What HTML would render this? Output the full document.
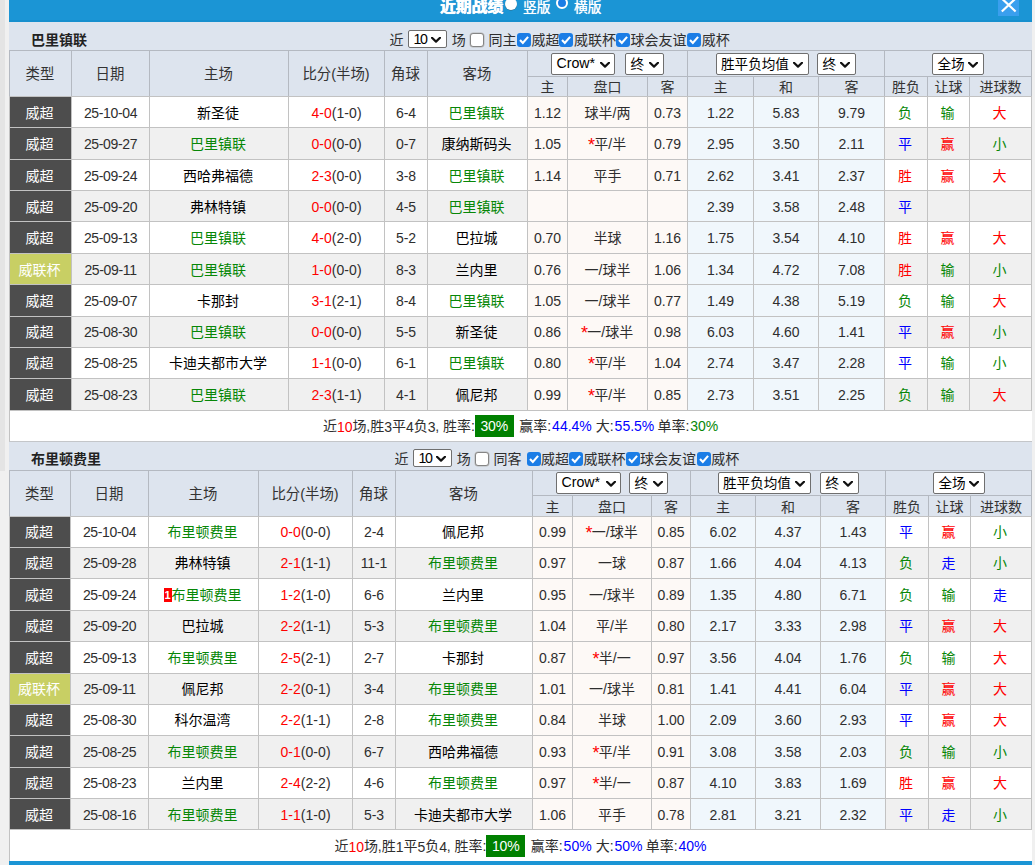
<!DOCTYPE html>
<html lang="zh-CN"><head><meta charset="utf-8"><title>近期战绩</title>
<style>

html,body{margin:0;padding:0}
body{width:1035px;height:865px;position:relative;overflow:hidden;background:#f0f0f0;
 font-family:"Liberation Sans","Noto Sans CJK SC",sans-serif;font-size:14px;color:#2e2e2e}
div{box-sizing:border-box}
.a{position:absolute}
.c{position:absolute;display:flex;align-items:center;justify-content:center;white-space:nowrap;overflow:hidden}
.n{font-size:14px;letter-spacing:-0.1px;position:relative;top:1px}
.dr{align-items:flex-start;line-height:20px}
.dr .n{top:0}
.as{font-size:18px;line-height:0;position:relative;top:1.5px;margin-right:-0.8px;margin-left:-0.8px}
.d{letter-spacing:-0.35px}
.s{letter-spacing:0.05px}
.m{margin-left:0.9px;letter-spacing:0px}
.ns{font-size:14.2px}
.t10{letter-spacing:-1.4px;position:relative;top:1px}
.sc{font-size:13.6px}
.g{color:#078707}.r{color:#ff0000}.b{color:#0000ff}.k{color:#000}
.sel{position:absolute;padding-bottom:1.5px;background:#fff;border:1px solid #6f6f6f;border-radius:2px;display:flex;align-items:center;white-space:nowrap;color:#000}
.sel svg{position:absolute;right:5px;top:50%;margin-top:-2.5px}
.cb{position:absolute;width:14px;height:14px;border-radius:3px}
.cb.off{background:#fff;border:1px solid #858585;box-shadow:0 0 0 0.5px #b8b8b8}
.cb.on{background:#1b7de6}
.t{position:absolute;white-space:nowrap;line-height:20px;height:20px}
.hd{background:#dde4ee}

</style></head><body>
<div class="a" style="left:0;top:0;width:5px;height:471px;background:#e4e4e4"></div>
<div class="a" style="left:9px;top:0;width:1023px;height:22px;background:#1b95d5"></div>
<div class="a" style="left:9px;top:20px;width:1023px;height:2px;background:#168fce"></div>
<div class="t" style="left:440px;top:-4px;color:#fff;font-weight:bold;text-shadow:0 0 0.8px #fff,0.3px 0 0 #fff;font-size:15.8px;line-height:22px;height:22px">近期战绩</div>
<div class="a" style="left:504.5px;top:-2px;width:12px;height:12px;border-radius:50%;background:#fff;box-shadow:0 0.5px 0.5px rgba(80,60,40,.5)"></div>
<div class="t" style="left:523px;top:-2.5px;color:#fff;font-weight:normal;text-shadow:0 0 0.7px #fff;font-size:13.8px">竖版</div>
<div class="a" style="left:556px;top:-3px;width:12px;height:12px;border-radius:50%;background:#1b7de6;border:2.5px solid #fff"></div>
<div class="t" style="left:574px;top:-2.5px;color:#fff;font-weight:normal;text-shadow:0 0 0.7px #fff;font-size:13.8px">横版</div>
<div class="a" style="left:998px;top:0;width:21px;height:16px;background:#3a9fee"></div>
<svg class="a" style="left:998px;top:0" width="21" height="16" viewBox="0 0 21 16"><path d="M3.8 -1.5 L17.6 11.5 M17.6 -1.5 L3.8 11.5" stroke="#fff" stroke-width="2.2" fill="none"/></svg>
<div class="a hd" style="left:9px;top:22px;width:1023px;height:28px"></div>
<div class="t" style="left:31px;top:30px;font-weight:bold;font-size:14px;color:#222">巴里镇联</div>
<div class="t" style="left:389.5px;top:30px">近</div>
<div class="sel" style="left:408px;top:30px;width:39px;height:18px;padding-left:4.6px"><span class="ns t10">10</span><svg style="right:5px" width="10" height="6" viewBox="0 0 10 6"><path d="M1 0.8 L5 4.6 L9 0.8" stroke="#111" stroke-width="2.2" fill="none" stroke-linecap="round" stroke-linejoin="round"/></svg></div>
<div class="t" style="left:451.8px;top:30px">场</div>
<div class="cb off" style="left:470px;top:33px"></div>
<div class="t" style="left:488.5px;top:30px">同主</div>
<div class="cb on" style="left:517px;top:33px"><svg width="14" height="14" viewBox="0 0 13 13" style="display:block"><path d="M2.8 6.6 L5.4 9.2 L10.3 3.6" stroke="#fff" stroke-width="2" fill="none"/></svg></div>
<div class="t" style="left:531.6px;top:30px">威超</div>
<div class="cb on" style="left:559.3px;top:33px"><svg width="14" height="14" viewBox="0 0 13 13" style="display:block"><path d="M2.8 6.6 L5.4 9.2 L10.3 3.6" stroke="#fff" stroke-width="2" fill="none"/></svg></div>
<div class="t" style="left:573.9px;top:30px">威联杯</div>
<div class="cb on" style="left:616px;top:33px"><svg width="14" height="14" viewBox="0 0 13 13" style="display:block"><path d="M2.8 6.6 L5.4 9.2 L10.3 3.6" stroke="#fff" stroke-width="2" fill="none"/></svg></div>
<div class="t" style="left:630.6px;top:30px">球会友谊</div>
<div class="cb on" style="left:687.1px;top:33px"><svg width="14" height="14" viewBox="0 0 13 13" style="display:block"><path d="M2.8 6.6 L5.4 9.2 L10.3 3.6" stroke="#fff" stroke-width="2" fill="none"/></svg></div>
<div class="t" style="left:701.7px;top:30px">威杯</div>
<div class="a" style="left:9px;top:50px;width:1023px;height:47px;background:#b4b9c1"></div>
<div class="a" style="left:9px;top:96px;width:1023px;height:346px;background:#c2c2c2"></div>
<div class="c" style="left:10px;top:51px;width:61px;height:45px;background:#dde4ee;color:#333;font-size:14.4px;padding-bottom:2.5px;padding-right:1px">类型</div>
<div class="c" style="left:72px;top:51px;width:77px;height:45px;background:#dde4ee;color:#333;font-size:14.4px;padding-bottom:2.5px;padding-right:1px">日期</div>
<div class="c" style="left:150px;top:51px;width:138px;height:45px;background:#dde4ee;color:#333;font-size:14.4px;padding-bottom:2.5px;padding-right:1px">主场</div>
<div class="c" style="left:289px;top:51px;width:95px;height:45px;background:#dde4ee;color:#333;font-size:14.4px;padding-bottom:2.5px;padding-right:1px">比分(半场)</div>
<div class="c" style="left:385px;top:51px;width:42px;height:45px;background:#dde4ee;color:#333;font-size:14.4px;padding-bottom:2.5px;padding-right:1px">角球</div>
<div class="c" style="left:428px;top:51px;width:99px;height:45px;background:#dde4ee;color:#333;font-size:14.4px;padding-bottom:2.5px;padding-right:1px">客场</div>
<div class="c" style="left:528px;top:51px;width:159px;height:25px;background:#dde4ee;"></div>
<div class="c" style="left:688px;top:51px;width:196px;height:25px;background:#dde4ee;"></div>
<div class="c" style="left:885px;top:51px;width:146px;height:25px;background:#dde4ee;"></div>
<div class="c" style="left:528px;top:77px;width:39px;height:19px;background:#dde4ee;color:#333;padding-bottom:1px">主</div>
<div class="c" style="left:568px;top:77px;width:79px;height:19px;background:#dde4ee;color:#333;padding-bottom:1px">盘口</div>
<div class="c" style="left:648px;top:77px;width:39px;height:19px;background:#dde4ee;color:#333;padding-bottom:1px">客</div>
<div class="c" style="left:688px;top:77px;width:65px;height:19px;background:#dde4ee;color:#333;padding-bottom:1px">主</div>
<div class="c" style="left:754px;top:77px;width:64px;height:19px;background:#dde4ee;color:#333;padding-bottom:1px">和</div>
<div class="c" style="left:819px;top:77px;width:65px;height:19px;background:#dde4ee;color:#333;padding-bottom:1px">客</div>
<div class="c" style="left:885px;top:77px;width:42px;height:19px;background:#dde4ee;color:#333;padding-bottom:1px">胜负</div>
<div class="c" style="left:928px;top:77px;width:41px;height:19px;background:#dde4ee;color:#333;padding-bottom:1px">让球</div>
<div class="c" style="left:970px;top:77px;width:61px;height:19px;background:#dde4ee;color:#333;padding-bottom:1px">进球数</div>
<div class="sel" style="left:551px;top:53px;width:64px;height:22px;padding-left:4.5px"><span class="ns">Crow*</span><svg style="right:4px" width="10" height="6" viewBox="0 0 10 6"><path d="M1 0.8 L5 4.6 L9 0.8" stroke="#111" stroke-width="2.2" fill="none" stroke-linecap="round" stroke-linejoin="round"/></svg></div>
<div class="sel" style="left:625px;top:53px;width:39px;height:22px;padding-left:4.5px"><span class="sc">终</span><svg style="right:4px" width="10" height="6" viewBox="0 0 10 6"><path d="M1 0.8 L5 4.6 L9 0.8" stroke="#111" stroke-width="2.2" fill="none" stroke-linecap="round" stroke-linejoin="round"/></svg></div>
<div class="sel" style="left:716px;top:53px;width:93px;height:22px;padding-left:4px"><span class="sc">胜平负均值</span><svg style="right:5px" width="10" height="6" viewBox="0 0 10 6"><path d="M1 0.8 L5 4.6 L9 0.8" stroke="#111" stroke-width="2.2" fill="none" stroke-linecap="round" stroke-linejoin="round"/></svg></div>
<div class="sel" style="left:817px;top:53px;width:39px;height:22px;padding-left:4.5px"><span class="sc">终</span><svg style="right:5px" width="10" height="6" viewBox="0 0 10 6"><path d="M1 0.8 L5 4.6 L9 0.8" stroke="#111" stroke-width="2.2" fill="none" stroke-linecap="round" stroke-linejoin="round"/></svg></div>
<div class="sel" style="left:932px;top:53px;width:52px;height:22px;padding-left:4.5px"><span class="sc">全场</span><svg style="right:5px" width="10" height="6" viewBox="0 0 10 6"><path d="M1 0.8 L5 4.6 L9 0.8" stroke="#111" stroke-width="2.2" fill="none" stroke-linecap="round" stroke-linejoin="round"/></svg></div>
<div class="c dr" style="left:10px;top:97px;width:61px;height:30px;background:#4d4d4d;padding-top:6px;color:#fff;padding-right:2px">威超</div>
<div class="c dr" style="left:72px;top:97px;width:77px;height:30px;background:#fff;padding-top:6px;"><span class="n d">25-10-04</span></div>
<div class="c dr" style="left:150px;top:97px;width:138px;height:30px;background:#fff;padding-top:6px;padding-right:2px"><span class="k">新圣徒</span></div>
<div class="c dr" style="left:289px;top:97px;width:95px;height:30px;background:#fff;padding-top:6px;"><span class="n s"><span class="r">4-0</span>(1-0)</span></div>
<div class="c dr" style="left:385px;top:97px;width:42px;height:30px;background:#fff;padding-top:6px;"><span class="n">6-4</span></div>
<div class="c dr" style="left:428px;top:97px;width:99px;height:30px;background:#fff;padding-top:6px;padding-right:2px"><span class="g">巴里镇联</span></div>
<div class="c dr" style="left:528px;top:97px;width:39px;height:30px;background:#fdf9f6;padding-top:6px;"><span class="n">1.12</span></div>
<div class="c dr" style="left:568px;top:97px;width:79px;height:30px;background:#fdf9f6;padding-top:6px;"><span>球半/两</span></div>
<div class="c dr" style="left:648px;top:97px;width:39px;height:30px;background:#fdf9f6;padding-top:6px;"><span class="n">0.73</span></div>
<div class="c dr" style="left:688px;top:97px;width:65px;height:30px;background:#f0f7fc;padding-top:6px;"><span class="n">1.22</span></div>
<div class="c dr" style="left:754px;top:97px;width:64px;height:30px;background:#f0f7fc;padding-top:6px;"><span class="n">5.83</span></div>
<div class="c dr" style="left:819px;top:97px;width:65px;height:30px;background:#f0f7fc;padding-top:6px;"><span class="n">9.79</span></div>
<div class="c dr" style="left:885px;top:97px;width:42px;height:30px;background:#fff;padding-top:6px;padding-right:2px"><span class="g">负</span></div>
<div class="c dr" style="left:928px;top:97px;width:41px;height:30px;background:#fff;padding-top:6px;padding-right:2px"><span class="g">输</span></div>
<div class="c dr" style="left:970px;top:97px;width:61px;height:30px;background:#fff;padding-top:6px;padding-right:2px"><span class="r">大</span></div>
<div class="c dr" style="left:10px;top:128px;width:61px;height:31px;background:#4d4d4d;padding-top:6px;color:#fff;padding-right:2px">威超</div>
<div class="c dr" style="left:72px;top:128px;width:77px;height:31px;background:#f0f0f0;padding-top:6px;"><span class="n d">25-09-27</span></div>
<div class="c dr" style="left:150px;top:128px;width:138px;height:31px;background:#f0f0f0;padding-top:6px;padding-right:2px"><span class="g">巴里镇联</span></div>
<div class="c dr" style="left:289px;top:128px;width:95px;height:31px;background:#f0f0f0;padding-top:6px;"><span class="n s"><span class="r">0-0</span>(0-0)</span></div>
<div class="c dr" style="left:385px;top:128px;width:42px;height:31px;background:#f0f0f0;padding-top:6px;"><span class="n">0-7</span></div>
<div class="c dr" style="left:428px;top:128px;width:99px;height:31px;background:#f0f0f0;padding-top:6px;padding-right:2px"><span class="k">康纳斯码头</span></div>
<div class="c dr" style="left:528px;top:128px;width:39px;height:31px;background:#fdf9f6;padding-top:6px;"><span class="n">1.05</span></div>
<div class="c dr" style="left:568px;top:128px;width:79px;height:31px;background:#fdf9f6;padding-top:6px;"><span><span class="r as">*</span>平/半</span></div>
<div class="c dr" style="left:648px;top:128px;width:39px;height:31px;background:#fdf9f6;padding-top:6px;"><span class="n">0.79</span></div>
<div class="c dr" style="left:688px;top:128px;width:65px;height:31px;background:#f0f7fc;padding-top:6px;"><span class="n">2.95</span></div>
<div class="c dr" style="left:754px;top:128px;width:64px;height:31px;background:#f0f7fc;padding-top:6px;"><span class="n">3.50</span></div>
<div class="c dr" style="left:819px;top:128px;width:65px;height:31px;background:#f0f7fc;padding-top:6px;"><span class="n">2.11</span></div>
<div class="c dr" style="left:885px;top:128px;width:42px;height:31px;background:#f0f0f0;padding-top:6px;padding-right:2px"><span class="b">平</span></div>
<div class="c dr" style="left:928px;top:128px;width:41px;height:31px;background:#f0f0f0;padding-top:6px;padding-right:2px"><span class="r">赢</span></div>
<div class="c dr" style="left:970px;top:128px;width:61px;height:31px;background:#f0f0f0;padding-top:6px;padding-right:2px"><span class="g">小</span></div>
<div class="c dr" style="left:10px;top:160px;width:61px;height:30px;background:#4d4d4d;padding-top:6px;color:#fff;padding-right:2px">威超</div>
<div class="c dr" style="left:72px;top:160px;width:77px;height:30px;background:#fff;padding-top:6px;"><span class="n d">25-09-24</span></div>
<div class="c dr" style="left:150px;top:160px;width:138px;height:30px;background:#fff;padding-top:6px;padding-right:2px"><span class="k">西哈弗福德</span></div>
<div class="c dr" style="left:289px;top:160px;width:95px;height:30px;background:#fff;padding-top:6px;"><span class="n s"><span class="r">2-3</span>(0-0)</span></div>
<div class="c dr" style="left:385px;top:160px;width:42px;height:30px;background:#fff;padding-top:6px;"><span class="n">3-8</span></div>
<div class="c dr" style="left:428px;top:160px;width:99px;height:30px;background:#fff;padding-top:6px;padding-right:2px"><span class="g">巴里镇联</span></div>
<div class="c dr" style="left:528px;top:160px;width:39px;height:30px;background:#fdf9f6;padding-top:6px;"><span class="n">1.14</span></div>
<div class="c dr" style="left:568px;top:160px;width:79px;height:30px;background:#fdf9f6;padding-top:6px;"><span>平手</span></div>
<div class="c dr" style="left:648px;top:160px;width:39px;height:30px;background:#fdf9f6;padding-top:6px;"><span class="n">0.71</span></div>
<div class="c dr" style="left:688px;top:160px;width:65px;height:30px;background:#f0f7fc;padding-top:6px;"><span class="n">2.62</span></div>
<div class="c dr" style="left:754px;top:160px;width:64px;height:30px;background:#f0f7fc;padding-top:6px;"><span class="n">3.41</span></div>
<div class="c dr" style="left:819px;top:160px;width:65px;height:30px;background:#f0f7fc;padding-top:6px;"><span class="n">2.37</span></div>
<div class="c dr" style="left:885px;top:160px;width:42px;height:30px;background:#fff;padding-top:6px;padding-right:2px"><span class="r">胜</span></div>
<div class="c dr" style="left:928px;top:160px;width:41px;height:30px;background:#fff;padding-top:6px;padding-right:2px"><span class="r">赢</span></div>
<div class="c dr" style="left:970px;top:160px;width:61px;height:30px;background:#fff;padding-top:6px;padding-right:2px"><span class="r">大</span></div>
<div class="c dr" style="left:10px;top:191px;width:61px;height:30px;background:#4d4d4d;padding-top:6px;color:#fff;padding-right:2px">威超</div>
<div class="c dr" style="left:72px;top:191px;width:77px;height:30px;background:#f0f0f0;padding-top:6px;"><span class="n d">25-09-20</span></div>
<div class="c dr" style="left:150px;top:191px;width:138px;height:30px;background:#f0f0f0;padding-top:6px;padding-right:2px"><span class="k">弗林特镇</span></div>
<div class="c dr" style="left:289px;top:191px;width:95px;height:30px;background:#f0f0f0;padding-top:6px;"><span class="n s"><span class="r">0-0</span>(0-0)</span></div>
<div class="c dr" style="left:385px;top:191px;width:42px;height:30px;background:#f0f0f0;padding-top:6px;"><span class="n">4-5</span></div>
<div class="c dr" style="left:428px;top:191px;width:99px;height:30px;background:#f0f0f0;padding-top:6px;padding-right:2px"><span class="g">巴里镇联</span></div>
<div class="c dr" style="left:528px;top:191px;width:39px;height:30px;background:#fdf9f6;padding-top:6px;"><span class="n"></span></div>
<div class="c dr" style="left:568px;top:191px;width:79px;height:30px;background:#fdf9f6;padding-top:6px;"><span></span></div>
<div class="c dr" style="left:648px;top:191px;width:39px;height:30px;background:#fdf9f6;padding-top:6px;"><span class="n"></span></div>
<div class="c dr" style="left:688px;top:191px;width:65px;height:30px;background:#f0f7fc;padding-top:6px;"><span class="n">2.39</span></div>
<div class="c dr" style="left:754px;top:191px;width:64px;height:30px;background:#f0f7fc;padding-top:6px;"><span class="n">3.58</span></div>
<div class="c dr" style="left:819px;top:191px;width:65px;height:30px;background:#f0f7fc;padding-top:6px;"><span class="n">2.48</span></div>
<div class="c dr" style="left:885px;top:191px;width:42px;height:30px;background:#f0f0f0;padding-top:6px;padding-right:2px"><span class="b">平</span></div>
<div class="c dr" style="left:928px;top:191px;width:41px;height:30px;background:#f0f0f0;padding-top:6px;padding-right:2px"><span class=""></span></div>
<div class="c dr" style="left:970px;top:191px;width:61px;height:30px;background:#f0f0f0;padding-top:6px;padding-right:2px"><span class=""></span></div>
<div class="c dr" style="left:10px;top:222px;width:61px;height:31px;background:#4d4d4d;padding-top:6px;color:#fff;padding-right:2px">威超</div>
<div class="c dr" style="left:72px;top:222px;width:77px;height:31px;background:#fff;padding-top:6px;"><span class="n d">25-09-13</span></div>
<div class="c dr" style="left:150px;top:222px;width:138px;height:31px;background:#fff;padding-top:6px;padding-right:2px"><span class="g">巴里镇联</span></div>
<div class="c dr" style="left:289px;top:222px;width:95px;height:31px;background:#fff;padding-top:6px;"><span class="n s"><span class="r">4-0</span>(2-0)</span></div>
<div class="c dr" style="left:385px;top:222px;width:42px;height:31px;background:#fff;padding-top:6px;"><span class="n">5-2</span></div>
<div class="c dr" style="left:428px;top:222px;width:99px;height:31px;background:#fff;padding-top:6px;padding-right:2px"><span class="k">巴拉城</span></div>
<div class="c dr" style="left:528px;top:222px;width:39px;height:31px;background:#fdf9f6;padding-top:6px;"><span class="n">0.70</span></div>
<div class="c dr" style="left:568px;top:222px;width:79px;height:31px;background:#fdf9f6;padding-top:6px;"><span>半球</span></div>
<div class="c dr" style="left:648px;top:222px;width:39px;height:31px;background:#fdf9f6;padding-top:6px;"><span class="n">1.16</span></div>
<div class="c dr" style="left:688px;top:222px;width:65px;height:31px;background:#f0f7fc;padding-top:6px;"><span class="n">1.75</span></div>
<div class="c dr" style="left:754px;top:222px;width:64px;height:31px;background:#f0f7fc;padding-top:6px;"><span class="n">3.54</span></div>
<div class="c dr" style="left:819px;top:222px;width:65px;height:31px;background:#f0f7fc;padding-top:6px;"><span class="n">4.10</span></div>
<div class="c dr" style="left:885px;top:222px;width:42px;height:31px;background:#fff;padding-top:6px;padding-right:2px"><span class="r">胜</span></div>
<div class="c dr" style="left:928px;top:222px;width:41px;height:31px;background:#fff;padding-top:6px;padding-right:2px"><span class="r">赢</span></div>
<div class="c dr" style="left:970px;top:222px;width:61px;height:31px;background:#fff;padding-top:6px;padding-right:2px"><span class="r">大</span></div>
<div class="c dr" style="left:10px;top:254px;width:61px;height:30px;background:#c8cf64;padding-top:6px;color:#fff;padding-right:2px">威联杯</div>
<div class="c dr" style="left:72px;top:254px;width:77px;height:30px;background:#f0f0f0;padding-top:6px;"><span class="n d">25-09-11</span></div>
<div class="c dr" style="left:150px;top:254px;width:138px;height:30px;background:#f0f0f0;padding-top:6px;padding-right:2px"><span class="g">巴里镇联</span></div>
<div class="c dr" style="left:289px;top:254px;width:95px;height:30px;background:#f0f0f0;padding-top:6px;"><span class="n s"><span class="r">1-0</span>(0-0)</span></div>
<div class="c dr" style="left:385px;top:254px;width:42px;height:30px;background:#f0f0f0;padding-top:6px;"><span class="n">8-3</span></div>
<div class="c dr" style="left:428px;top:254px;width:99px;height:30px;background:#f0f0f0;padding-top:6px;padding-right:2px"><span class="k">兰内里</span></div>
<div class="c dr" style="left:528px;top:254px;width:39px;height:30px;background:#fdf9f6;padding-top:6px;"><span class="n">0.76</span></div>
<div class="c dr" style="left:568px;top:254px;width:79px;height:30px;background:#fdf9f6;padding-top:6px;"><span>一/球半</span></div>
<div class="c dr" style="left:648px;top:254px;width:39px;height:30px;background:#fdf9f6;padding-top:6px;"><span class="n">1.06</span></div>
<div class="c dr" style="left:688px;top:254px;width:65px;height:30px;background:#f0f7fc;padding-top:6px;"><span class="n">1.34</span></div>
<div class="c dr" style="left:754px;top:254px;width:64px;height:30px;background:#f0f7fc;padding-top:6px;"><span class="n">4.72</span></div>
<div class="c dr" style="left:819px;top:254px;width:65px;height:30px;background:#f0f7fc;padding-top:6px;"><span class="n">7.08</span></div>
<div class="c dr" style="left:885px;top:254px;width:42px;height:30px;background:#f0f0f0;padding-top:6px;padding-right:2px"><span class="r">胜</span></div>
<div class="c dr" style="left:928px;top:254px;width:41px;height:30px;background:#f0f0f0;padding-top:6px;padding-right:2px"><span class="g">输</span></div>
<div class="c dr" style="left:970px;top:254px;width:61px;height:30px;background:#f0f0f0;padding-top:6px;padding-right:2px"><span class="g">小</span></div>
<div class="c dr" style="left:10px;top:285px;width:61px;height:31px;background:#4d4d4d;padding-top:6px;color:#fff;padding-right:2px">威超</div>
<div class="c dr" style="left:72px;top:285px;width:77px;height:31px;background:#fff;padding-top:6px;"><span class="n d">25-09-07</span></div>
<div class="c dr" style="left:150px;top:285px;width:138px;height:31px;background:#fff;padding-top:6px;padding-right:2px"><span class="k">卡那封</span></div>
<div class="c dr" style="left:289px;top:285px;width:95px;height:31px;background:#fff;padding-top:6px;"><span class="n s"><span class="r">3-1</span>(2-1)</span></div>
<div class="c dr" style="left:385px;top:285px;width:42px;height:31px;background:#fff;padding-top:6px;"><span class="n">8-4</span></div>
<div class="c dr" style="left:428px;top:285px;width:99px;height:31px;background:#fff;padding-top:6px;padding-right:2px"><span class="g">巴里镇联</span></div>
<div class="c dr" style="left:528px;top:285px;width:39px;height:31px;background:#fdf9f6;padding-top:6px;"><span class="n">1.05</span></div>
<div class="c dr" style="left:568px;top:285px;width:79px;height:31px;background:#fdf9f6;padding-top:6px;"><span>一/球半</span></div>
<div class="c dr" style="left:648px;top:285px;width:39px;height:31px;background:#fdf9f6;padding-top:6px;"><span class="n">0.77</span></div>
<div class="c dr" style="left:688px;top:285px;width:65px;height:31px;background:#f0f7fc;padding-top:6px;"><span class="n">1.49</span></div>
<div class="c dr" style="left:754px;top:285px;width:64px;height:31px;background:#f0f7fc;padding-top:6px;"><span class="n">4.38</span></div>
<div class="c dr" style="left:819px;top:285px;width:65px;height:31px;background:#f0f7fc;padding-top:6px;"><span class="n">5.19</span></div>
<div class="c dr" style="left:885px;top:285px;width:42px;height:31px;background:#fff;padding-top:6px;padding-right:2px"><span class="g">负</span></div>
<div class="c dr" style="left:928px;top:285px;width:41px;height:31px;background:#fff;padding-top:6px;padding-right:2px"><span class="g">输</span></div>
<div class="c dr" style="left:970px;top:285px;width:61px;height:31px;background:#fff;padding-top:6px;padding-right:2px"><span class="r">大</span></div>
<div class="c dr" style="left:10px;top:317px;width:61px;height:30px;background:#4d4d4d;padding-top:5px;color:#fff;padding-right:2px">威超</div>
<div class="c dr" style="left:72px;top:317px;width:77px;height:30px;background:#f0f0f0;padding-top:5px;"><span class="n d">25-08-30</span></div>
<div class="c dr" style="left:150px;top:317px;width:138px;height:30px;background:#f0f0f0;padding-top:5px;padding-right:2px"><span class="g">巴里镇联</span></div>
<div class="c dr" style="left:289px;top:317px;width:95px;height:30px;background:#f0f0f0;padding-top:5px;"><span class="n s"><span class="r">0-0</span>(0-0)</span></div>
<div class="c dr" style="left:385px;top:317px;width:42px;height:30px;background:#f0f0f0;padding-top:5px;"><span class="n">5-5</span></div>
<div class="c dr" style="left:428px;top:317px;width:99px;height:30px;background:#f0f0f0;padding-top:5px;padding-right:2px"><span class="k">新圣徒</span></div>
<div class="c dr" style="left:528px;top:317px;width:39px;height:30px;background:#fdf9f6;padding-top:5px;"><span class="n">0.86</span></div>
<div class="c dr" style="left:568px;top:317px;width:79px;height:30px;background:#fdf9f6;padding-top:5px;"><span><span class="r as">*</span>一/球半</span></div>
<div class="c dr" style="left:648px;top:317px;width:39px;height:30px;background:#fdf9f6;padding-top:5px;"><span class="n">0.98</span></div>
<div class="c dr" style="left:688px;top:317px;width:65px;height:30px;background:#f0f7fc;padding-top:5px;"><span class="n">6.03</span></div>
<div class="c dr" style="left:754px;top:317px;width:64px;height:30px;background:#f0f7fc;padding-top:5px;"><span class="n">4.60</span></div>
<div class="c dr" style="left:819px;top:317px;width:65px;height:30px;background:#f0f7fc;padding-top:5px;"><span class="n">1.41</span></div>
<div class="c dr" style="left:885px;top:317px;width:42px;height:30px;background:#f0f0f0;padding-top:5px;padding-right:2px"><span class="b">平</span></div>
<div class="c dr" style="left:928px;top:317px;width:41px;height:30px;background:#f0f0f0;padding-top:5px;padding-right:2px"><span class="r">赢</span></div>
<div class="c dr" style="left:970px;top:317px;width:61px;height:30px;background:#f0f0f0;padding-top:5px;padding-right:2px"><span class="g">小</span></div>
<div class="c dr" style="left:10px;top:348px;width:61px;height:30px;background:#4d4d4d;padding-top:5px;color:#fff;padding-right:2px">威超</div>
<div class="c dr" style="left:72px;top:348px;width:77px;height:30px;background:#fff;padding-top:5px;"><span class="n d">25-08-25</span></div>
<div class="c dr" style="left:150px;top:348px;width:138px;height:30px;background:#fff;padding-top:5px;padding-right:2px"><span class="k">卡迪夫都市大学</span></div>
<div class="c dr" style="left:289px;top:348px;width:95px;height:30px;background:#fff;padding-top:5px;"><span class="n s"><span class="r">1-1</span>(0-0)</span></div>
<div class="c dr" style="left:385px;top:348px;width:42px;height:30px;background:#fff;padding-top:5px;"><span class="n">6-1</span></div>
<div class="c dr" style="left:428px;top:348px;width:99px;height:30px;background:#fff;padding-top:5px;padding-right:2px"><span class="g">巴里镇联</span></div>
<div class="c dr" style="left:528px;top:348px;width:39px;height:30px;background:#fdf9f6;padding-top:5px;"><span class="n">0.80</span></div>
<div class="c dr" style="left:568px;top:348px;width:79px;height:30px;background:#fdf9f6;padding-top:5px;"><span><span class="r as">*</span>平/半</span></div>
<div class="c dr" style="left:648px;top:348px;width:39px;height:30px;background:#fdf9f6;padding-top:5px;"><span class="n">1.04</span></div>
<div class="c dr" style="left:688px;top:348px;width:65px;height:30px;background:#f0f7fc;padding-top:5px;"><span class="n">2.74</span></div>
<div class="c dr" style="left:754px;top:348px;width:64px;height:30px;background:#f0f7fc;padding-top:5px;"><span class="n">3.47</span></div>
<div class="c dr" style="left:819px;top:348px;width:65px;height:30px;background:#f0f7fc;padding-top:5px;"><span class="n">2.28</span></div>
<div class="c dr" style="left:885px;top:348px;width:42px;height:30px;background:#fff;padding-top:5px;padding-right:2px"><span class="b">平</span></div>
<div class="c dr" style="left:928px;top:348px;width:41px;height:30px;background:#fff;padding-top:5px;padding-right:2px"><span class="g">输</span></div>
<div class="c dr" style="left:970px;top:348px;width:61px;height:30px;background:#fff;padding-top:5px;padding-right:2px"><span class="g">小</span></div>
<div class="c dr" style="left:10px;top:379px;width:61px;height:31px;background:#4d4d4d;padding-top:6px;color:#fff;padding-right:2px">威超</div>
<div class="c dr" style="left:72px;top:379px;width:77px;height:31px;background:#f0f0f0;padding-top:6px;"><span class="n d">25-08-23</span></div>
<div class="c dr" style="left:150px;top:379px;width:138px;height:31px;background:#f0f0f0;padding-top:6px;padding-right:2px"><span class="g">巴里镇联</span></div>
<div class="c dr" style="left:289px;top:379px;width:95px;height:31px;background:#f0f0f0;padding-top:6px;"><span class="n s"><span class="r">2-3</span>(1-1)</span></div>
<div class="c dr" style="left:385px;top:379px;width:42px;height:31px;background:#f0f0f0;padding-top:6px;"><span class="n">4-1</span></div>
<div class="c dr" style="left:428px;top:379px;width:99px;height:31px;background:#f0f0f0;padding-top:6px;padding-right:2px"><span class="k">佩尼邦</span></div>
<div class="c dr" style="left:528px;top:379px;width:39px;height:31px;background:#fdf9f6;padding-top:6px;"><span class="n">0.99</span></div>
<div class="c dr" style="left:568px;top:379px;width:79px;height:31px;background:#fdf9f6;padding-top:6px;"><span><span class="r as">*</span>平/半</span></div>
<div class="c dr" style="left:648px;top:379px;width:39px;height:31px;background:#fdf9f6;padding-top:6px;"><span class="n">0.85</span></div>
<div class="c dr" style="left:688px;top:379px;width:65px;height:31px;background:#f0f7fc;padding-top:6px;"><span class="n">2.73</span></div>
<div class="c dr" style="left:754px;top:379px;width:64px;height:31px;background:#f0f7fc;padding-top:6px;"><span class="n">3.51</span></div>
<div class="c dr" style="left:819px;top:379px;width:65px;height:31px;background:#f0f7fc;padding-top:6px;"><span class="n">2.25</span></div>
<div class="c dr" style="left:885px;top:379px;width:42px;height:31px;background:#f0f0f0;padding-top:6px;padding-right:2px"><span class="g">负</span></div>
<div class="c dr" style="left:928px;top:379px;width:41px;height:31px;background:#f0f0f0;padding-top:6px;padding-right:2px"><span class="g">输</span></div>
<div class="c dr" style="left:970px;top:379px;width:61px;height:31px;background:#f0f0f0;padding-top:6px;padding-right:2px"><span class="r">大</span></div>
<div class="c" style="left:10px;top:411px;width:1022px;height:30px;background:#fff"><span style="position:absolute;left:313px;top:-1px;height:100%;display:flex;align-items:center"><span>近<span class="r n">10</span>场,胜<span class="n">3</span>平<span class="n">4</span>负<span class="n">3</span>, 胜率:</span><span style="display:inline-block;background:#008000;color:#fff;height:22px;line-height:21px;position:relative;top:1px;padding:0 5.8px;margin-left:-0.4px"><span class="n">30%</span></span><span style="margin-left:5.4px">赢率:</span><span class="b n m">44.4%</span><span style="margin-left:4px">大:</span><span class="b n m">55.5%</span><span style="margin-left:3.2px">单率:</span><span class="g n m">30%</span></span></div>
<div class="a hd" style="left:9px;top:441px;width:1023px;height:29px"></div>
<div class="t" style="left:31px;top:449px;font-weight:bold;font-size:14px;color:#222">布里顿费里</div>
<div class="t" style="left:394.5px;top:449px">近</div>
<div class="sel" style="left:413px;top:449px;width:39px;height:18px;padding-left:4.6px"><span class="ns t10">10</span><svg style="right:5px" width="10" height="6" viewBox="0 0 10 6"><path d="M1 0.8 L5 4.6 L9 0.8" stroke="#111" stroke-width="2.2" fill="none" stroke-linecap="round" stroke-linejoin="round"/></svg></div>
<div class="t" style="left:456.8px;top:449px">场</div>
<div class="cb off" style="left:475px;top:452px"></div>
<div class="t" style="left:493.5px;top:449px">同客</div>
<div class="cb on" style="left:526.5px;top:452px"><svg width="14" height="14" viewBox="0 0 13 13" style="display:block"><path d="M2.8 6.6 L5.4 9.2 L10.3 3.6" stroke="#fff" stroke-width="2" fill="none"/></svg></div>
<div class="t" style="left:541.1px;top:449px">威超</div>
<div class="cb on" style="left:568.8px;top:452px"><svg width="14" height="14" viewBox="0 0 13 13" style="display:block"><path d="M2.8 6.6 L5.4 9.2 L10.3 3.6" stroke="#fff" stroke-width="2" fill="none"/></svg></div>
<div class="t" style="left:583.4px;top:449px">威联杯</div>
<div class="cb on" style="left:625.5px;top:452px"><svg width="14" height="14" viewBox="0 0 13 13" style="display:block"><path d="M2.8 6.6 L5.4 9.2 L10.3 3.6" stroke="#fff" stroke-width="2" fill="none"/></svg></div>
<div class="t" style="left:640.1px;top:449px">球会友谊</div>
<div class="cb on" style="left:696.6px;top:452px"><svg width="14" height="14" viewBox="0 0 13 13" style="display:block"><path d="M2.8 6.6 L5.4 9.2 L10.3 3.6" stroke="#fff" stroke-width="2" fill="none"/></svg></div>
<div class="t" style="left:711.2px;top:449px">威杯</div>
<div class="a" style="left:9px;top:441px;width:1023px;height:1px;background:#c4c6c9"></div>
<div class="a" style="left:9px;top:470px;width:1023px;height:47px;background:#b4b9c1"></div>
<div class="a" style="left:9px;top:516px;width:1023px;height:345px;background:#c2c2c2"></div>
<div class="c" style="left:10px;top:471px;width:60px;height:45px;background:#dde4ee;color:#333;font-size:14.4px;padding-bottom:2.5px;padding-right:1px">类型</div>
<div class="c" style="left:71px;top:471px;width:77px;height:45px;background:#dde4ee;color:#333;font-size:14.4px;padding-bottom:2.5px;padding-right:1px">日期</div>
<div class="c" style="left:149px;top:471px;width:109px;height:45px;background:#dde4ee;color:#333;font-size:14.4px;padding-bottom:2.5px;padding-right:1px">主场</div>
<div class="c" style="left:259px;top:471px;width:93px;height:45px;background:#dde4ee;color:#333;font-size:14.4px;padding-bottom:2.5px;padding-right:1px">比分(半场)</div>
<div class="c" style="left:353px;top:471px;width:42px;height:45px;background:#dde4ee;color:#333;font-size:14.4px;padding-bottom:2.5px;padding-right:1px">角球</div>
<div class="c" style="left:396px;top:471px;width:136px;height:45px;background:#dde4ee;color:#333;font-size:14.4px;padding-bottom:2.5px;padding-right:1px">客场</div>
<div class="c" style="left:533px;top:471px;width:157px;height:24px;background:#dde4ee;"></div>
<div class="c" style="left:691px;top:471px;width:194px;height:24px;background:#dde4ee;"></div>
<div class="c" style="left:886px;top:471px;width:145px;height:24px;background:#dde4ee;"></div>
<div class="c" style="left:533px;top:496px;width:39px;height:20px;background:#dde4ee;color:#333;padding-bottom:1px">主</div>
<div class="c" style="left:573px;top:496px;width:78px;height:20px;background:#dde4ee;color:#333;padding-bottom:1px">盘口</div>
<div class="c" style="left:652px;top:496px;width:38px;height:20px;background:#dde4ee;color:#333;padding-bottom:1px">客</div>
<div class="c" style="left:691px;top:496px;width:64px;height:20px;background:#dde4ee;color:#333;padding-bottom:1px">主</div>
<div class="c" style="left:756px;top:496px;width:64px;height:20px;background:#dde4ee;color:#333;padding-bottom:1px">和</div>
<div class="c" style="left:821px;top:496px;width:64px;height:20px;background:#dde4ee;color:#333;padding-bottom:1px">客</div>
<div class="c" style="left:886px;top:496px;width:42px;height:20px;background:#dde4ee;color:#333;padding-bottom:1px">胜负</div>
<div class="c" style="left:929px;top:496px;width:41px;height:20px;background:#dde4ee;color:#333;padding-bottom:1px">让球</div>
<div class="c" style="left:971px;top:496px;width:60px;height:20px;background:#dde4ee;color:#333;padding-bottom:1px">进球数</div>
<div class="sel" style="left:556px;top:472px;width:65px;height:22px;padding-left:4.5px"><span class="ns">Crow*</span><svg style="right:4px" width="10" height="6" viewBox="0 0 10 6"><path d="M1 0.8 L5 4.6 L9 0.8" stroke="#111" stroke-width="2.2" fill="none" stroke-linecap="round" stroke-linejoin="round"/></svg></div>
<div class="sel" style="left:629px;top:472px;width:39px;height:22px;padding-left:4.5px"><span class="sc">终</span><svg style="right:4px" width="10" height="6" viewBox="0 0 10 6"><path d="M1 0.8 L5 4.6 L9 0.8" stroke="#111" stroke-width="2.2" fill="none" stroke-linecap="round" stroke-linejoin="round"/></svg></div>
<div class="sel" style="left:718px;top:472px;width:93px;height:22px;padding-left:4px"><span class="sc">胜平负均值</span><svg style="right:5px" width="10" height="6" viewBox="0 0 10 6"><path d="M1 0.8 L5 4.6 L9 0.8" stroke="#111" stroke-width="2.2" fill="none" stroke-linecap="round" stroke-linejoin="round"/></svg></div>
<div class="sel" style="left:820px;top:472px;width:39px;height:22px;padding-left:4.5px"><span class="sc">终</span><svg style="right:5px" width="10" height="6" viewBox="0 0 10 6"><path d="M1 0.8 L5 4.6 L9 0.8" stroke="#111" stroke-width="2.2" fill="none" stroke-linecap="round" stroke-linejoin="round"/></svg></div>
<div class="sel" style="left:933px;top:472px;width:52px;height:22px;padding-left:4.5px"><span class="sc">全场</span><svg style="right:5px" width="10" height="6" viewBox="0 0 10 6"><path d="M1 0.8 L5 4.6 L9 0.8" stroke="#111" stroke-width="2.2" fill="none" stroke-linecap="round" stroke-linejoin="round"/></svg></div>
<div class="c dr" style="left:10px;top:517px;width:60px;height:30px;background:#4d4d4d;padding-top:5px;color:#fff;padding-right:2px">威超</div>
<div class="c dr" style="left:71px;top:517px;width:77px;height:30px;background:#fff;padding-top:5px;"><span class="n d">25-10-04</span></div>
<div class="c dr" style="left:149px;top:517px;width:109px;height:30px;background:#fff;padding-top:5px;padding-right:2px"><span class="g">布里顿费里</span></div>
<div class="c dr" style="left:259px;top:517px;width:93px;height:30px;background:#fff;padding-top:5px;"><span class="n s"><span class="r">0-0</span>(0-0)</span></div>
<div class="c dr" style="left:353px;top:517px;width:42px;height:30px;background:#fff;padding-top:5px;"><span class="n">2-4</span></div>
<div class="c dr" style="left:396px;top:517px;width:136px;height:30px;background:#fff;padding-top:5px;padding-right:2px"><span class="k">佩尼邦</span></div>
<div class="c dr" style="left:533px;top:517px;width:39px;height:30px;background:#fdf9f6;padding-top:5px;"><span class="n">0.99</span></div>
<div class="c dr" style="left:573px;top:517px;width:78px;height:30px;background:#fdf9f6;padding-top:5px;"><span><span class="r as">*</span>一/球半</span></div>
<div class="c dr" style="left:652px;top:517px;width:38px;height:30px;background:#fdf9f6;padding-top:5px;"><span class="n">0.85</span></div>
<div class="c dr" style="left:691px;top:517px;width:64px;height:30px;background:#f0f7fc;padding-top:5px;"><span class="n">6.02</span></div>
<div class="c dr" style="left:756px;top:517px;width:64px;height:30px;background:#f0f7fc;padding-top:5px;"><span class="n">4.37</span></div>
<div class="c dr" style="left:821px;top:517px;width:64px;height:30px;background:#f0f7fc;padding-top:5px;"><span class="n">1.43</span></div>
<div class="c dr" style="left:886px;top:517px;width:42px;height:30px;background:#fff;padding-top:5px;padding-right:2px"><span class="b">平</span></div>
<div class="c dr" style="left:929px;top:517px;width:41px;height:30px;background:#fff;padding-top:5px;padding-right:2px"><span class="r">赢</span></div>
<div class="c dr" style="left:971px;top:517px;width:60px;height:30px;background:#fff;padding-top:5px;padding-right:2px"><span class="g">小</span></div>
<div class="c dr" style="left:10px;top:548px;width:60px;height:30px;background:#4d4d4d;padding-top:5px;color:#fff;padding-right:2px">威超</div>
<div class="c dr" style="left:71px;top:548px;width:77px;height:30px;background:#f0f0f0;padding-top:5px;"><span class="n d">25-09-28</span></div>
<div class="c dr" style="left:149px;top:548px;width:109px;height:30px;background:#f0f0f0;padding-top:5px;padding-right:2px"><span class="k">弗林特镇</span></div>
<div class="c dr" style="left:259px;top:548px;width:93px;height:30px;background:#f0f0f0;padding-top:5px;"><span class="n s"><span class="r">2-1</span>(1-1)</span></div>
<div class="c dr" style="left:353px;top:548px;width:42px;height:30px;background:#f0f0f0;padding-top:5px;"><span class="n">11-1</span></div>
<div class="c dr" style="left:396px;top:548px;width:136px;height:30px;background:#f0f0f0;padding-top:5px;padding-right:2px"><span class="g">布里顿费里</span></div>
<div class="c dr" style="left:533px;top:548px;width:39px;height:30px;background:#fdf9f6;padding-top:5px;"><span class="n">0.97</span></div>
<div class="c dr" style="left:573px;top:548px;width:78px;height:30px;background:#fdf9f6;padding-top:5px;"><span>一球</span></div>
<div class="c dr" style="left:652px;top:548px;width:38px;height:30px;background:#fdf9f6;padding-top:5px;"><span class="n">0.87</span></div>
<div class="c dr" style="left:691px;top:548px;width:64px;height:30px;background:#f0f7fc;padding-top:5px;"><span class="n">1.66</span></div>
<div class="c dr" style="left:756px;top:548px;width:64px;height:30px;background:#f0f7fc;padding-top:5px;"><span class="n">4.04</span></div>
<div class="c dr" style="left:821px;top:548px;width:64px;height:30px;background:#f0f7fc;padding-top:5px;"><span class="n">4.13</span></div>
<div class="c dr" style="left:886px;top:548px;width:42px;height:30px;background:#f0f0f0;padding-top:5px;padding-right:2px"><span class="g">负</span></div>
<div class="c dr" style="left:929px;top:548px;width:41px;height:30px;background:#f0f0f0;padding-top:5px;padding-right:2px"><span class="b">走</span></div>
<div class="c dr" style="left:971px;top:548px;width:60px;height:30px;background:#f0f0f0;padding-top:5px;padding-right:2px"><span class="g">小</span></div>
<div class="c dr" style="left:10px;top:579px;width:60px;height:31px;background:#4d4d4d;padding-top:6px;color:#fff;padding-right:2px">威超</div>
<div class="c dr" style="left:71px;top:579px;width:77px;height:31px;background:#fff;padding-top:6px;"><span class="n d">25-09-24</span></div>
<div class="c dr" style="left:149px;top:579px;width:109px;height:31px;background:#fff;padding-top:6px;padding-right:2px"><span class="g"><span style="display:inline-block;background:#f00;color:#fff;font-weight:bold;font-size:11px;width:8px;height:14px;line-height:14px;text-align:center;position:relative;top:-1px;font-family:'Liberation Sans',sans-serif">1</span>布里顿费里</span></div>
<div class="c dr" style="left:259px;top:579px;width:93px;height:31px;background:#fff;padding-top:6px;"><span class="n s"><span class="r">1-2</span>(1-0)</span></div>
<div class="c dr" style="left:353px;top:579px;width:42px;height:31px;background:#fff;padding-top:6px;"><span class="n">6-6</span></div>
<div class="c dr" style="left:396px;top:579px;width:136px;height:31px;background:#fff;padding-top:6px;padding-right:2px"><span class="k">兰内里</span></div>
<div class="c dr" style="left:533px;top:579px;width:39px;height:31px;background:#fdf9f6;padding-top:6px;"><span class="n">0.95</span></div>
<div class="c dr" style="left:573px;top:579px;width:78px;height:31px;background:#fdf9f6;padding-top:6px;"><span>一/球半</span></div>
<div class="c dr" style="left:652px;top:579px;width:38px;height:31px;background:#fdf9f6;padding-top:6px;"><span class="n">0.89</span></div>
<div class="c dr" style="left:691px;top:579px;width:64px;height:31px;background:#f0f7fc;padding-top:6px;"><span class="n">1.35</span></div>
<div class="c dr" style="left:756px;top:579px;width:64px;height:31px;background:#f0f7fc;padding-top:6px;"><span class="n">4.80</span></div>
<div class="c dr" style="left:821px;top:579px;width:64px;height:31px;background:#f0f7fc;padding-top:6px;"><span class="n">6.71</span></div>
<div class="c dr" style="left:886px;top:579px;width:42px;height:31px;background:#fff;padding-top:6px;padding-right:2px"><span class="g">负</span></div>
<div class="c dr" style="left:929px;top:579px;width:41px;height:31px;background:#fff;padding-top:6px;padding-right:2px"><span class="g">输</span></div>
<div class="c dr" style="left:971px;top:579px;width:60px;height:31px;background:#fff;padding-top:6px;padding-right:2px"><span class="b">走</span></div>
<div class="c dr" style="left:10px;top:611px;width:60px;height:30px;background:#4d4d4d;padding-top:5px;color:#fff;padding-right:2px">威超</div>
<div class="c dr" style="left:71px;top:611px;width:77px;height:30px;background:#f0f0f0;padding-top:5px;"><span class="n d">25-09-20</span></div>
<div class="c dr" style="left:149px;top:611px;width:109px;height:30px;background:#f0f0f0;padding-top:5px;padding-right:2px"><span class="k">巴拉城</span></div>
<div class="c dr" style="left:259px;top:611px;width:93px;height:30px;background:#f0f0f0;padding-top:5px;"><span class="n s"><span class="r">2-2</span>(1-1)</span></div>
<div class="c dr" style="left:353px;top:611px;width:42px;height:30px;background:#f0f0f0;padding-top:5px;"><span class="n">5-3</span></div>
<div class="c dr" style="left:396px;top:611px;width:136px;height:30px;background:#f0f0f0;padding-top:5px;padding-right:2px"><span class="g">布里顿费里</span></div>
<div class="c dr" style="left:533px;top:611px;width:39px;height:30px;background:#fdf9f6;padding-top:5px;"><span class="n">1.04</span></div>
<div class="c dr" style="left:573px;top:611px;width:78px;height:30px;background:#fdf9f6;padding-top:5px;"><span>平/半</span></div>
<div class="c dr" style="left:652px;top:611px;width:38px;height:30px;background:#fdf9f6;padding-top:5px;"><span class="n">0.80</span></div>
<div class="c dr" style="left:691px;top:611px;width:64px;height:30px;background:#f0f7fc;padding-top:5px;"><span class="n">2.17</span></div>
<div class="c dr" style="left:756px;top:611px;width:64px;height:30px;background:#f0f7fc;padding-top:5px;"><span class="n">3.33</span></div>
<div class="c dr" style="left:821px;top:611px;width:64px;height:30px;background:#f0f7fc;padding-top:5px;"><span class="n">2.98</span></div>
<div class="c dr" style="left:886px;top:611px;width:42px;height:30px;background:#f0f0f0;padding-top:5px;padding-right:2px"><span class="b">平</span></div>
<div class="c dr" style="left:929px;top:611px;width:41px;height:30px;background:#f0f0f0;padding-top:5px;padding-right:2px"><span class="r">赢</span></div>
<div class="c dr" style="left:971px;top:611px;width:60px;height:30px;background:#f0f0f0;padding-top:5px;padding-right:2px"><span class="r">大</span></div>
<div class="c dr" style="left:10px;top:642px;width:60px;height:31px;background:#4d4d4d;padding-top:6px;color:#fff;padding-right:2px">威超</div>
<div class="c dr" style="left:71px;top:642px;width:77px;height:31px;background:#fff;padding-top:6px;"><span class="n d">25-09-13</span></div>
<div class="c dr" style="left:149px;top:642px;width:109px;height:31px;background:#fff;padding-top:6px;padding-right:2px"><span class="g">布里顿费里</span></div>
<div class="c dr" style="left:259px;top:642px;width:93px;height:31px;background:#fff;padding-top:6px;"><span class="n s"><span class="r">2-5</span>(2-1)</span></div>
<div class="c dr" style="left:353px;top:642px;width:42px;height:31px;background:#fff;padding-top:6px;"><span class="n">2-7</span></div>
<div class="c dr" style="left:396px;top:642px;width:136px;height:31px;background:#fff;padding-top:6px;padding-right:2px"><span class="k">卡那封</span></div>
<div class="c dr" style="left:533px;top:642px;width:39px;height:31px;background:#fdf9f6;padding-top:6px;"><span class="n">0.87</span></div>
<div class="c dr" style="left:573px;top:642px;width:78px;height:31px;background:#fdf9f6;padding-top:6px;"><span><span class="r as">*</span>半/一</span></div>
<div class="c dr" style="left:652px;top:642px;width:38px;height:31px;background:#fdf9f6;padding-top:6px;"><span class="n">0.97</span></div>
<div class="c dr" style="left:691px;top:642px;width:64px;height:31px;background:#f0f7fc;padding-top:6px;"><span class="n">3.56</span></div>
<div class="c dr" style="left:756px;top:642px;width:64px;height:31px;background:#f0f7fc;padding-top:6px;"><span class="n">4.04</span></div>
<div class="c dr" style="left:821px;top:642px;width:64px;height:31px;background:#f0f7fc;padding-top:6px;"><span class="n">1.76</span></div>
<div class="c dr" style="left:886px;top:642px;width:42px;height:31px;background:#fff;padding-top:6px;padding-right:2px"><span class="g">负</span></div>
<div class="c dr" style="left:929px;top:642px;width:41px;height:31px;background:#fff;padding-top:6px;padding-right:2px"><span class="g">输</span></div>
<div class="c dr" style="left:971px;top:642px;width:60px;height:31px;background:#fff;padding-top:6px;padding-right:2px"><span class="r">大</span></div>
<div class="c dr" style="left:10px;top:674px;width:60px;height:30px;background:#c8cf64;padding-top:5px;color:#fff;padding-right:2px">威联杯</div>
<div class="c dr" style="left:71px;top:674px;width:77px;height:30px;background:#f0f0f0;padding-top:5px;"><span class="n d">25-09-11</span></div>
<div class="c dr" style="left:149px;top:674px;width:109px;height:30px;background:#f0f0f0;padding-top:5px;padding-right:2px"><span class="k">佩尼邦</span></div>
<div class="c dr" style="left:259px;top:674px;width:93px;height:30px;background:#f0f0f0;padding-top:5px;"><span class="n s"><span class="r">2-2</span>(0-1)</span></div>
<div class="c dr" style="left:353px;top:674px;width:42px;height:30px;background:#f0f0f0;padding-top:5px;"><span class="n">3-4</span></div>
<div class="c dr" style="left:396px;top:674px;width:136px;height:30px;background:#f0f0f0;padding-top:5px;padding-right:2px"><span class="g">布里顿费里</span></div>
<div class="c dr" style="left:533px;top:674px;width:39px;height:30px;background:#fdf9f6;padding-top:5px;"><span class="n">1.01</span></div>
<div class="c dr" style="left:573px;top:674px;width:78px;height:30px;background:#fdf9f6;padding-top:5px;"><span>一/球半</span></div>
<div class="c dr" style="left:652px;top:674px;width:38px;height:30px;background:#fdf9f6;padding-top:5px;"><span class="n">0.81</span></div>
<div class="c dr" style="left:691px;top:674px;width:64px;height:30px;background:#f0f7fc;padding-top:5px;"><span class="n">1.41</span></div>
<div class="c dr" style="left:756px;top:674px;width:64px;height:30px;background:#f0f7fc;padding-top:5px;"><span class="n">4.41</span></div>
<div class="c dr" style="left:821px;top:674px;width:64px;height:30px;background:#f0f7fc;padding-top:5px;"><span class="n">6.04</span></div>
<div class="c dr" style="left:886px;top:674px;width:42px;height:30px;background:#f0f0f0;padding-top:5px;padding-right:2px"><span class="b">平</span></div>
<div class="c dr" style="left:929px;top:674px;width:41px;height:30px;background:#f0f0f0;padding-top:5px;padding-right:2px"><span class="r">赢</span></div>
<div class="c dr" style="left:971px;top:674px;width:60px;height:30px;background:#f0f0f0;padding-top:5px;padding-right:2px"><span class="r">大</span></div>
<div class="c dr" style="left:10px;top:705px;width:60px;height:30px;background:#4d4d4d;padding-top:5px;color:#fff;padding-right:2px">威超</div>
<div class="c dr" style="left:71px;top:705px;width:77px;height:30px;background:#fff;padding-top:5px;"><span class="n d">25-08-30</span></div>
<div class="c dr" style="left:149px;top:705px;width:109px;height:30px;background:#fff;padding-top:5px;padding-right:2px"><span class="k">科尔温湾</span></div>
<div class="c dr" style="left:259px;top:705px;width:93px;height:30px;background:#fff;padding-top:5px;"><span class="n s"><span class="r">2-2</span>(1-1)</span></div>
<div class="c dr" style="left:353px;top:705px;width:42px;height:30px;background:#fff;padding-top:5px;"><span class="n">2-8</span></div>
<div class="c dr" style="left:396px;top:705px;width:136px;height:30px;background:#fff;padding-top:5px;padding-right:2px"><span class="g">布里顿费里</span></div>
<div class="c dr" style="left:533px;top:705px;width:39px;height:30px;background:#fdf9f6;padding-top:5px;"><span class="n">0.84</span></div>
<div class="c dr" style="left:573px;top:705px;width:78px;height:30px;background:#fdf9f6;padding-top:5px;"><span>半球</span></div>
<div class="c dr" style="left:652px;top:705px;width:38px;height:30px;background:#fdf9f6;padding-top:5px;"><span class="n">1.00</span></div>
<div class="c dr" style="left:691px;top:705px;width:64px;height:30px;background:#f0f7fc;padding-top:5px;"><span class="n">2.09</span></div>
<div class="c dr" style="left:756px;top:705px;width:64px;height:30px;background:#f0f7fc;padding-top:5px;"><span class="n">3.60</span></div>
<div class="c dr" style="left:821px;top:705px;width:64px;height:30px;background:#f0f7fc;padding-top:5px;"><span class="n">2.93</span></div>
<div class="c dr" style="left:886px;top:705px;width:42px;height:30px;background:#fff;padding-top:5px;padding-right:2px"><span class="b">平</span></div>
<div class="c dr" style="left:929px;top:705px;width:41px;height:30px;background:#fff;padding-top:5px;padding-right:2px"><span class="r">赢</span></div>
<div class="c dr" style="left:971px;top:705px;width:60px;height:30px;background:#fff;padding-top:5px;padding-right:2px"><span class="r">大</span></div>
<div class="c dr" style="left:10px;top:736px;width:60px;height:31px;background:#4d4d4d;padding-top:6px;color:#fff;padding-right:2px">威超</div>
<div class="c dr" style="left:71px;top:736px;width:77px;height:31px;background:#f0f0f0;padding-top:6px;"><span class="n d">25-08-25</span></div>
<div class="c dr" style="left:149px;top:736px;width:109px;height:31px;background:#f0f0f0;padding-top:6px;padding-right:2px"><span class="g">布里顿费里</span></div>
<div class="c dr" style="left:259px;top:736px;width:93px;height:31px;background:#f0f0f0;padding-top:6px;"><span class="n s"><span class="r">0-1</span>(0-0)</span></div>
<div class="c dr" style="left:353px;top:736px;width:42px;height:31px;background:#f0f0f0;padding-top:6px;"><span class="n">6-7</span></div>
<div class="c dr" style="left:396px;top:736px;width:136px;height:31px;background:#f0f0f0;padding-top:6px;padding-right:2px"><span class="k">西哈弗福德</span></div>
<div class="c dr" style="left:533px;top:736px;width:39px;height:31px;background:#fdf9f6;padding-top:6px;"><span class="n">0.93</span></div>
<div class="c dr" style="left:573px;top:736px;width:78px;height:31px;background:#fdf9f6;padding-top:6px;"><span><span class="r as">*</span>平/半</span></div>
<div class="c dr" style="left:652px;top:736px;width:38px;height:31px;background:#fdf9f6;padding-top:6px;"><span class="n">0.91</span></div>
<div class="c dr" style="left:691px;top:736px;width:64px;height:31px;background:#f0f7fc;padding-top:6px;"><span class="n">3.08</span></div>
<div class="c dr" style="left:756px;top:736px;width:64px;height:31px;background:#f0f7fc;padding-top:6px;"><span class="n">3.58</span></div>
<div class="c dr" style="left:821px;top:736px;width:64px;height:31px;background:#f0f7fc;padding-top:6px;"><span class="n">2.03</span></div>
<div class="c dr" style="left:886px;top:736px;width:42px;height:31px;background:#f0f0f0;padding-top:6px;padding-right:2px"><span class="g">负</span></div>
<div class="c dr" style="left:929px;top:736px;width:41px;height:31px;background:#f0f0f0;padding-top:6px;padding-right:2px"><span class="g">输</span></div>
<div class="c dr" style="left:971px;top:736px;width:60px;height:31px;background:#f0f0f0;padding-top:6px;padding-right:2px"><span class="g">小</span></div>
<div class="c dr" style="left:10px;top:768px;width:60px;height:30px;background:#4d4d4d;padding-top:5px;color:#fff;padding-right:2px">威超</div>
<div class="c dr" style="left:71px;top:768px;width:77px;height:30px;background:#fff;padding-top:5px;"><span class="n d">25-08-23</span></div>
<div class="c dr" style="left:149px;top:768px;width:109px;height:30px;background:#fff;padding-top:5px;padding-right:2px"><span class="k">兰内里</span></div>
<div class="c dr" style="left:259px;top:768px;width:93px;height:30px;background:#fff;padding-top:5px;"><span class="n s"><span class="r">2-4</span>(2-2)</span></div>
<div class="c dr" style="left:353px;top:768px;width:42px;height:30px;background:#fff;padding-top:5px;"><span class="n">4-6</span></div>
<div class="c dr" style="left:396px;top:768px;width:136px;height:30px;background:#fff;padding-top:5px;padding-right:2px"><span class="g">布里顿费里</span></div>
<div class="c dr" style="left:533px;top:768px;width:39px;height:30px;background:#fdf9f6;padding-top:5px;"><span class="n">0.97</span></div>
<div class="c dr" style="left:573px;top:768px;width:78px;height:30px;background:#fdf9f6;padding-top:5px;"><span><span class="r as">*</span>半/一</span></div>
<div class="c dr" style="left:652px;top:768px;width:38px;height:30px;background:#fdf9f6;padding-top:5px;"><span class="n">0.87</span></div>
<div class="c dr" style="left:691px;top:768px;width:64px;height:30px;background:#f0f7fc;padding-top:5px;"><span class="n">4.10</span></div>
<div class="c dr" style="left:756px;top:768px;width:64px;height:30px;background:#f0f7fc;padding-top:5px;"><span class="n">3.83</span></div>
<div class="c dr" style="left:821px;top:768px;width:64px;height:30px;background:#f0f7fc;padding-top:5px;"><span class="n">1.69</span></div>
<div class="c dr" style="left:886px;top:768px;width:42px;height:30px;background:#fff;padding-top:5px;padding-right:2px"><span class="r">胜</span></div>
<div class="c dr" style="left:929px;top:768px;width:41px;height:30px;background:#fff;padding-top:5px;padding-right:2px"><span class="r">赢</span></div>
<div class="c dr" style="left:971px;top:768px;width:60px;height:30px;background:#fff;padding-top:5px;padding-right:2px"><span class="r">大</span></div>
<div class="c dr" style="left:10px;top:799px;width:60px;height:30px;background:#4d4d4d;padding-top:6px;color:#fff;padding-right:2px">威超</div>
<div class="c dr" style="left:71px;top:799px;width:77px;height:30px;background:#f0f0f0;padding-top:6px;"><span class="n d">25-08-16</span></div>
<div class="c dr" style="left:149px;top:799px;width:109px;height:30px;background:#f0f0f0;padding-top:6px;padding-right:2px"><span class="g">布里顿费里</span></div>
<div class="c dr" style="left:259px;top:799px;width:93px;height:30px;background:#f0f0f0;padding-top:6px;"><span class="n s"><span class="r">1-1</span>(1-0)</span></div>
<div class="c dr" style="left:353px;top:799px;width:42px;height:30px;background:#f0f0f0;padding-top:6px;"><span class="n">5-3</span></div>
<div class="c dr" style="left:396px;top:799px;width:136px;height:30px;background:#f0f0f0;padding-top:6px;padding-right:2px"><span class="k">卡迪夫都市大学</span></div>
<div class="c dr" style="left:533px;top:799px;width:39px;height:30px;background:#fdf9f6;padding-top:6px;"><span class="n">1.06</span></div>
<div class="c dr" style="left:573px;top:799px;width:78px;height:30px;background:#fdf9f6;padding-top:6px;"><span>平手</span></div>
<div class="c dr" style="left:652px;top:799px;width:38px;height:30px;background:#fdf9f6;padding-top:6px;"><span class="n">0.78</span></div>
<div class="c dr" style="left:691px;top:799px;width:64px;height:30px;background:#f0f7fc;padding-top:6px;"><span class="n">2.81</span></div>
<div class="c dr" style="left:756px;top:799px;width:64px;height:30px;background:#f0f7fc;padding-top:6px;"><span class="n">3.21</span></div>
<div class="c dr" style="left:821px;top:799px;width:64px;height:30px;background:#f0f7fc;padding-top:6px;"><span class="n">2.32</span></div>
<div class="c dr" style="left:886px;top:799px;width:42px;height:30px;background:#f0f0f0;padding-top:6px;padding-right:2px"><span class="b">平</span></div>
<div class="c dr" style="left:929px;top:799px;width:41px;height:30px;background:#f0f0f0;padding-top:6px;padding-right:2px"><span class="b">走</span></div>
<div class="c dr" style="left:971px;top:799px;width:60px;height:30px;background:#f0f0f0;padding-top:6px;padding-right:2px"><span class="g">小</span></div>
<div class="c" style="left:10px;top:830px;width:1022px;height:31px;background:#fff"><span style="position:absolute;left:324.5px;top:-1px;height:100%;display:flex;align-items:center"><span>近<span class="r n">10</span>场,胜<span class="n">1</span>平<span class="n">5</span>负<span class="n">4</span>, 胜率:</span><span style="display:inline-block;background:#008000;color:#fff;height:22px;line-height:21px;position:relative;top:1px;padding:0 5.8px;margin-left:-0.4px"><span class="n">10%</span></span><span style="margin-left:5.4px">赢率:</span><span class="b n m">50%</span><span style="margin-left:4px">大:</span><span class="b n m">50%</span><span style="margin-left:3.2px">单率:</span><span class="b n m">40%</span></span></div>
<div class="a" style="left:9px;top:861px;width:1023px;height:4px;background:#1b95d5"></div>
</body></html>
